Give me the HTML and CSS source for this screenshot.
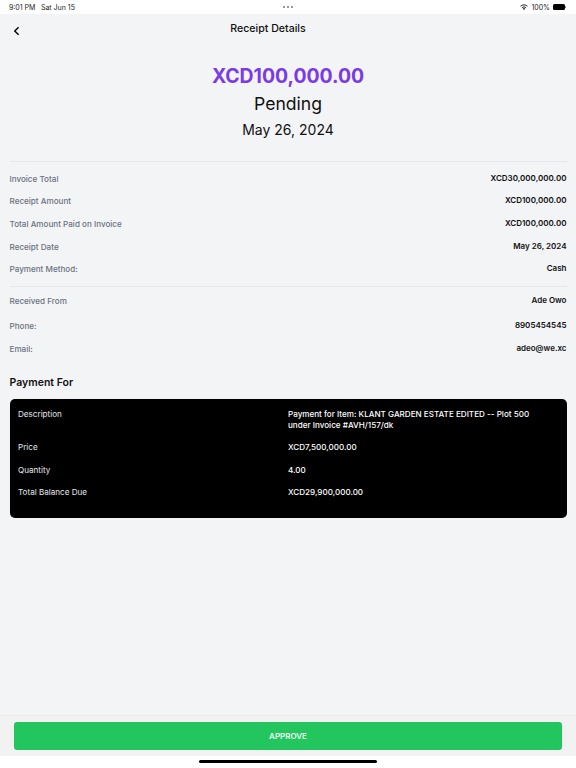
FILE: index.html
```html
<!DOCTYPE html>
<html lang="en">
<head>
  <meta charset="UTF-8">
  <meta name="viewport" content="width=device-width, initial-scale=1.0">
  <title>Receipt Details</title>
  <link rel="stylesheet" href="styles.css">
</head>
<body>
  <div class="status-bar">
    <div class="status-time"><span>9:01 PM</span><span>Sat Jun 15</span></div>
    <div class="status-dots"><i></i><i></i><i></i></div>
    <div class="status-right">
      <svg class="wifi" viewBox="0 0 16 12" width="8" height="6">
        <path d="M8 12 L5.4 9.2 C6.9 8 9.1 8 10.6 9.2 Z" fill="#111"/>
        <path d="M3.8 7.5 C6.2 5.4 9.8 5.4 12.2 7.5" fill="none" stroke="#111" stroke-width="1.8"/>
        <path d="M1 4.4 C5 0.8 11 0.8 15 4.4" fill="none" stroke="#111" stroke-width="1.8"/>
      </svg>
      <span>100%</span>
      <div class="battery"><div class="battery-nub"></div></div>
    </div>
  </div>

  <main class="content">
    <header class="top-bar">
      <svg class="back" viewBox="0 0 10 14" width="7" height="10">
        <path d="M8 1.5 L2.5 7 L8 12.5" fill="none" stroke="#000" stroke-width="2"/>
      </svg>
      <div class="page-title">Receipt Details</div>
    </header>

    <section class="summary">
      <div class="amount">XCD100,000.00</div>
      <div class="state">Pending</div>
      <div class="date">May 26, 2024</div>
    </section>

    <section class="details first">
      <div class="row"><div class="label">Invoice Total</div><div class="value">XCD30,000,000.00</div></div>
      <div class="row"><div class="label">Receipt Amount</div><div class="value">XCD100,000.00</div></div>
      <div class="row"><div class="label">Total Amount Paid on Invoice</div><div class="value">XCD100,000.00</div></div>
      <div class="row"><div class="label">Receipt Date</div><div class="value">May 26, 2024</div></div>
      <div class="row"><div class="label">Payment Method:</div><div class="value">Cash</div></div>
    </section>

    <section class="details second">
      <div class="row received"><div class="label">Received From</div><div class="value">Ade Owo</div></div>
      <div class="row"><div class="label">Phone:</div><div class="value">8905454545</div></div>
      <div class="row"><div class="label">Email:</div><div class="value">adeo@we.xc</div></div>
    </section>

    <h2 class="section-title">Payment For</h2>

    <section class="card">
      <div class="card-row"><div>Description</div><div class="card-value">Payment for Item: KLANT GARDEN ESTATE EDITED -- Plot 500 under Invoice #AVH/157/dk</div></div>
      <div class="card-row"><div>Price</div><div class="card-value">XCD7,500,000.00</div></div>
      <div class="card-row"><div>Quantity</div><div class="card-value">4.00</div></div>
      <div class="card-row"><div>Total Balance Due</div><div class="card-value">XCD29,900,000.00</div></div>
    </section>
  </main>

  <footer class="actions">
    <button class="approve">APPROVE</button>
  </footer>

  <div class="home-area"><div class="home-bar"></div></div>
</body>
</html>
```

FILE: styles.css
```css
* {
  box-sizing: border-box;
}
html, body {
  height: 100%;
}
body {
  margin: 0;
  height: 768px;
  display: flex;
  flex-direction: column;
  background: #fff;
  color: #000;
  font-family: Inter, "Liberation Sans", sans-serif;
  overflow: hidden;
}
.status-bar {
  height: 14px;
  padding: 0 10px 0 9px;
  display: flex;
  align-items: center;
  justify-content: space-between;
  font-size: 7px;
  color: #222;
  background: #fff;
}
.status-time {
  width: 120px;
  display: flex;
  gap: 5.5px;
}
.status-dots {
  display: flex;
  gap: 2px;
}
.status-dots i {
  width: 2px;
  height: 2px;
  border-radius: 50%;
  background: #777;
}
.status-right {
  width: 120px;
  display: flex;
  align-items: center;
  justify-content: flex-end;
  gap: 3px;
}
.battery {
  width: 12px;
  height: 6px;
  margin-right: 1px;
  position: relative;
  border-radius: 1.5px;
  background: #000;
}
.battery-nub {
  position: absolute;
  left: 12px;
  top: 2px;
  width: 1px;
  height: 2px;
  background: #888;
}
.content {
  flex: 1;
  padding: 0 9.5px;
  background: #f3f4f6;
}
.top-bar {
  height: 35px;
  position: relative;
}
.back {
  position: absolute;
  left: 3px;
  top: 12px;
}
.page-title {
  padding: 8px 40px 0 0;
  text-align: center;
  font-size: 10.6px;
  font-weight: 500;
  line-height: 13px;
  color: #111;
}
.summary {
  padding-top: 13px;
  height: 112px;
  text-align: center;
}
.amount {
  font-size: 19.4px;
  font-weight: 700;
  line-height: 28px;
  color: #7a3ae4;
}
.state {
  font-size: 17.6px;
  font-weight: 400;
  line-height: 28px;
  color: #111;
}
.date {
  font-size: 14px;
  line-height: 24px;
  color: #111;
}
.details {
  border-top: 1px solid #e5e7eb;
}
.details.first {
  padding: 5px 0 6px;
}
.details.second {
  padding-top: 2px;
}
.row {
  height: 22.6px;
  display: flex;
  align-items: center;
  justify-content: space-between;
}
.row.received {
  height: 23px;
  margin-bottom: 2.5px;
}
.label {
  padding-top: 1px;
  font-size: 8.1px;
  font-weight: 500;
  color: #6b7280;
}
.value {
  padding-bottom: 1px;
  font-size: 8px;
  font-weight: 600;
  color: #111;
}
.section-title {
  margin: 15.9px 0 10.5px;
  font-size: 10.5px;
  font-weight: 600;
  line-height: 13px;
  color: #111;
}
.card {
  height: 119px;
  padding: 10px 8.5px;
  border-radius: 5px;
  background: #000;
  color: #e5e7eb;
  font-size: 8.1px;
}
.card-row {
  display: grid;
  grid-template-columns: 270px 1fr;
  padding: 0 0 11.4px;
  line-height: 11px;
}
.card-value {
  max-width: 245px;
  font-weight: 500;
  color: #fff;
}
.actions {
  height: 41px;
  padding: 6px 14px;
  border-top: 1px solid #ececec;
  background: #f2f2f2;
}
.approve {
  display: block;
  width: 100%;
  height: 28px;
  border: 0;
  border-radius: 3px;
  background: #22c55e;
  color: #ecfdf3;
  font-family: inherit;
  font-size: 8px;
  font-weight: 600;
}
.home-area {
  height: 12px;
  padding-top: 4px;
  background: #fff;
}
.home-bar {
  width: 178px;
  height: 3px;
  margin: 0 auto;
  border-radius: 2px;
  background: #000;
}
```
